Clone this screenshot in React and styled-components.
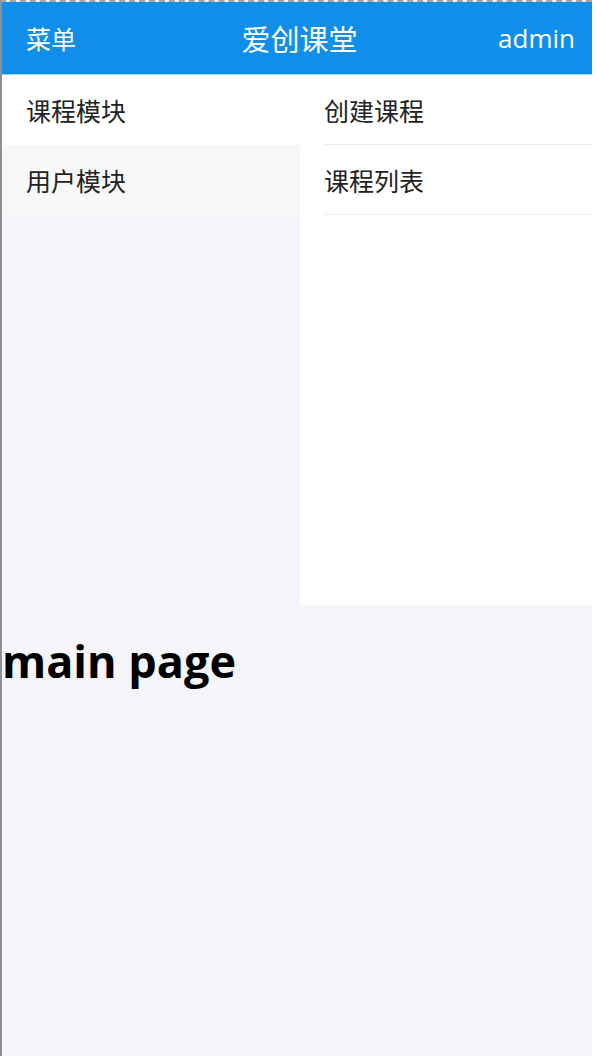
import React from 'react';
import styled, { createGlobalStyle } from 'styled-components';

const GlobalStyle = createGlobalStyle`
  html, body {
    margin: 0;
    padding: 0;
    background: #ffffff;
  }
  body {
    font-family: "Open Sans", "Noto Sans CJK SC", sans-serif;
  }
`;

const Frame = styled.div`
  box-sizing: border-box;
  width: 592px;
  height: 1056px;
  border-left: 2px solid #8f8f8f;
  border-top: 2px dashed #a6a6a6;
  background: #f5f5f9;
  overflow: hidden;
`;

const NavBar = styled.div`
  display: grid;
  grid-template-columns: 1fr auto 1fr;
  align-items: center;
  height: 72px;
  padding: 0 17px 0 24px;
  background: #108ee9;
  border-bottom: 1px solid #a3d2f6;
  color: #ffffff;
`;

const NavSide = styled.div`
  font-size: ${(props) => (props.right ? '26px' : '25px')};
  justify-self: ${(props) => (props.right ? 'end' : 'start')};
`;

const NavTitle = styled.div`
  font-size: 29px;
  margin-right: 2px;
`;

const Menu = styled.div`
  display: flex;
  height: 530px;
`;

const FirstLevel = styled.div`
  width: 298px;
`;

const FirstItem = styled.div`
  display: flex;
  align-items: center;
  height: 70px;
  padding-left: 24px;
  font-size: 25px;
  color: #222222;
  background: ${(props) => (props.active ? '#ffffff' : '#f7f7f7')};
`;

const SecondLevel = styled.div`
  flex: 1;
  background: #ffffff;
`;

const SecondItem = styled.div`
  display: flex;
  align-items: center;
  box-sizing: border-box;
  height: 70px;
  margin-left: 24px;
  font-size: 25px;
  color: #222222;
  border-bottom: 1px solid #eeeeee;
`;

const Heading = styled.h2`
  margin: 25px 0 0 0;
  font-size: 45px;
  font-weight: 700;
  color: #000000;
`;

const App = () => (
  <>
    <GlobalStyle />
    <Frame>
      <NavBar>
        <NavSide>菜单</NavSide>
        <NavTitle>爱创课堂</NavTitle>
        <NavSide right>admin</NavSide>
      </NavBar>
      <Menu>
        <FirstLevel>
          <FirstItem active>课程模块</FirstItem>
          <FirstItem>用户模块</FirstItem>
        </FirstLevel>
        <SecondLevel>
          <SecondItem>创建课程</SecondItem>
          <SecondItem>课程列表</SecondItem>
        </SecondLevel>
      </Menu>
      <Heading>main page</Heading>
    </Frame>
  </>
);

export default App;
